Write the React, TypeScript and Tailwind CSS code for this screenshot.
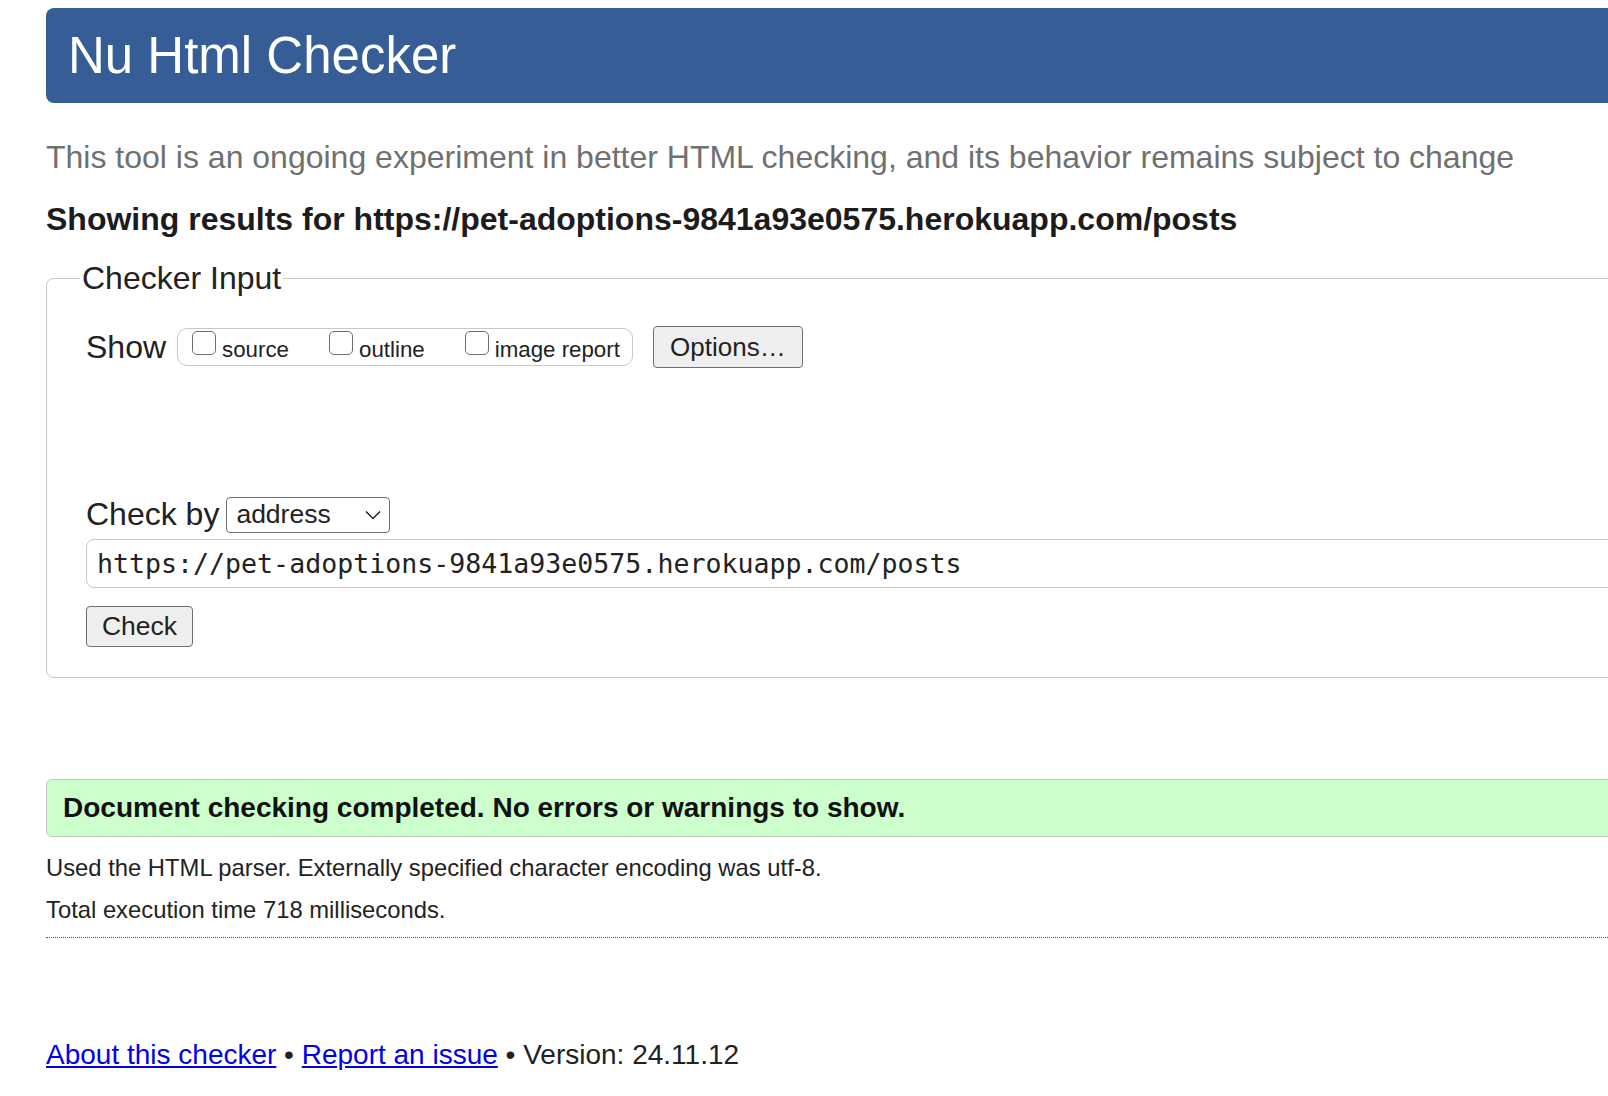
import React from "react";

const url = "https://pet-adoptions-9841a93e0575.herokuapp.com/posts";

function Box({ label }: { label: string }) {
  return (
    <label className="flex items-center">
      <span className="mb-[8px] h-[24px] w-[24px] rounded-[5px] border border-[#6f6f6f] bg-white" />
      <span className="ml-[6px] mt-[6px] text-[22.3px] leading-[26px]">{label}</span>
    </label>
  );
}

export default function App() {
  return (
    <div className="min-h-screen w-full overflow-hidden bg-white text-[#222] font-['Liberation_Sans',Arial,sans-serif]">
      <div className="ml-[46px] w-[1640px] pt-[8px]">
        {/* Title bar */}
        <h1 className="flex h-[95px] items-center rounded-[8px] bg-[#365d95] pl-[22px] text-[51px] leading-none text-white">
          Nu Html Checker
        </h1>

        <p className="mt-[36px] text-[32px] leading-[37px] text-[#707070]">
          This tool is an ongoing experiment in better HTML checking, and its behavior remains subject to change
        </p>
        <p className="mt-[25px] text-[32px] font-bold leading-[37px] text-[#1c1c1c]">
          Showing results for {url}
        </p>

        {/* Checker Input */}
        <fieldset className="mt-[22px] rounded-[8px] border border-[#c8c8c8] pb-[30px] pl-[39px] pr-[20px]">
          <legend className="-ml-[6px] px-[2px] text-[32px] leading-[37px]">Checker Input</legend>

          <div className="mt-[29px] flex items-center">
            <span className="text-[32px] leading-[37px]">Show</span>
            <div className="ml-[11px] flex h-[38px] items-center gap-[40px] rounded-[10px] border border-[#c8c8c8] pl-[14px] pr-[12px]">
              <Box label="source" />
              <Box label="outline" />
              <Box label="image report" />
            </div>
            <button className="ml-[20px] h-[42px] w-[150px] rounded-[4px] border border-[#6f6f6f] bg-[#efefef] text-[26px] leading-none">
              Options…
            </button>
          </div>

          <div className="mt-[128px] flex items-center">
            <span className="text-[32px] leading-[37px]">Check by</span>
            <div className="ml-[7px] flex h-[36px] w-[164px] items-center justify-between rounded-[4px] border border-[#6f6f6f] pl-[9px] pr-[8px]">
              <span className="text-[26.5px] leading-none">address</span>
              <svg width="16" height="10" viewBox="0 0 16 10" fill="none" stroke="#222" strokeWidth="1.5">
                <path d="M1 1.5 L8 8.5 L15 1.5" />
              </svg>
            </div>
          </div>

          <div className="mt-[6px] flex h-[49px] items-center rounded-[8px] border-[1.5px] border-[#c8c8c8] pl-[10px] font-['DejaVu_Sans_Mono',monospace] text-[26.6px]">
            {url}
          </div>

          <button className="mt-[18px] h-[41px] w-[107px] rounded-[4px] border border-[#6f6f6f] bg-[#efefef] text-[26.5px] leading-none">
            Check
          </button>
        </fieldset>

        {/* Result */}
        <div className="mt-[101px] flex h-[58px] items-center rounded-[6px] border border-[#c8c8c8] bg-[#ccffcc] pl-[16px]">
          <span className="text-[28px] font-bold leading-none text-[#111]">
            Document checking completed. No errors or warnings to show.
          </span>
        </div>

        <p className="mt-[17px] text-[23.8px] leading-[27px]">
          Used the HTML parser. Externally specified character encoding was utf-8.
        </p>
        <p className="mt-[15px] text-[23.8px] leading-[27px]">Total execution time 718 milliseconds.</p>

        <div className="mt-[14px] border-t border-dotted border-[#555]" />

        <p className="mt-[101px] text-[28px] leading-[32px]">
          <a className="text-[#0000ee] underline">About this checker</a> •{" "}
          <a className="text-[#0000ee] underline">Report an issue</a> • Version: 24.11.12
        </p>
      </div>
    </div>
  );
}
